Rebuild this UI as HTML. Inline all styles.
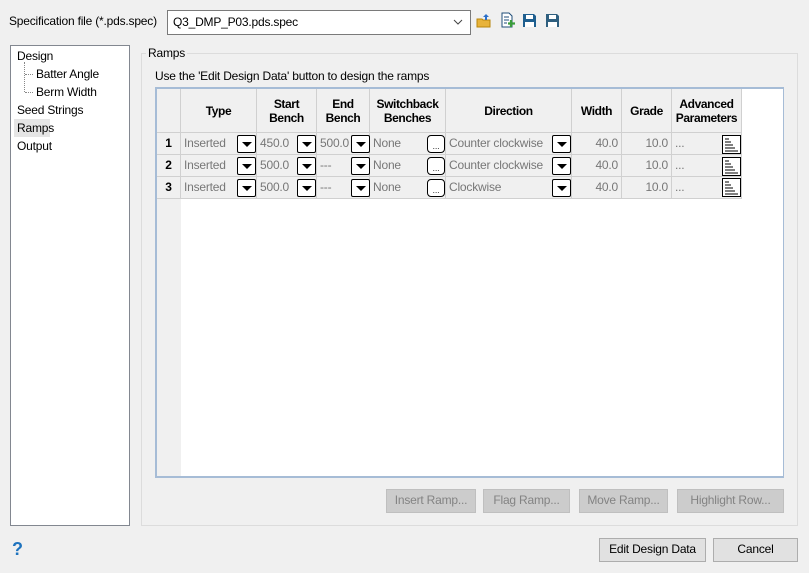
<!DOCTYPE html>
<html><head><style>
*{box-sizing:border-box;margin:0;padding:0}
body{width:809px;height:573px;background:#f0f0f0;font-family:"Liberation Sans",sans-serif;font-size:12px;letter-spacing:-0.2px;color:#000;position:relative;overflow:hidden}
.a{position:absolute;white-space:nowrap}
.btn{position:absolute;border:1px solid #adadad;background:#e1e1e1;text-align:center;line-height:21px}
.dis{background:#cccccc;border-color:#bfbfbf;color:#838383}
.hd{position:absolute;top:89px;height:44px;border-right:1px solid #d0d0d0;border-bottom:1px solid #d0d0d0;background:#f0f0f0;font-weight:bold;display:flex;align-items:center;justify-content:center;text-align:center;line-height:14px;letter-spacing:-0.4px}
.c{position:absolute;height:22px;border-right:1px solid #d0d0d0;border-bottom:1px solid #d0d0d0;background:#f0f0f0;color:#777;line-height:21px;padding-left:3px;overflow:hidden;white-space:nowrap}
.dd{position:absolute;width:19px;height:18px;border:1px solid #000;border-radius:2px;background:#fff}
.dd:after{content:"";position:absolute;left:4px;top:6px;border-left:5px solid transparent;border-right:5px solid transparent;border-top:5px solid #000}
.el{position:absolute;width:18px;height:18px;border:1px solid #000;border-radius:4px;background:#fff;font-size:9px;text-align:center;line-height:20px;color:#333}
.rn{position:absolute;left:157px;width:24px;height:22px;border-right:1px solid #d0d0d0;border-bottom:1px solid #d0d0d0;background:#f0f0f0;font-weight:bold;text-align:center;line-height:21px}
</style></head><body>
<div class="a" style="left:9px;top:14px">Specification file (*.pds.spec)</div>
<div class="a" style="left:167px;top:10px;width:304px;height:25px;background:#fff;border:1px solid #7a7a7a;padding:4px 0 0 5px">Q3_DMP_P03.pds.spec</div>
<svg class="a" style="left:453px;top:18px" width="10" height="8"><path d="M1 2l4 4 4-4" stroke="#444" fill="none"/></svg>
<svg class="a" style="left:476px;top:13px" width="16" height="16"><path d="M1 6h5l1 1h7v7H1z" fill="#e8b33a" stroke="#b8860b"/><path d="M10 1l3 3h-2v3h-2V4H7z" fill="#2a6fc9"/></svg>
<svg class="a" style="left:500px;top:12px" width="16" height="17"><path d="M2 1h7l3 3v11H2z" fill="#fff" stroke="#1f4e79"/><path d="M4 5h5M4 8h5M4 11h3" stroke="#1f4e79"/><path d="M11 8v7M8 11.5h7" stroke="#3a9c3a" stroke-width="2.2"/></svg>
<svg class="a" style="left:522px;top:13px" width="15" height="15"><path d="M1 1h11l2 2v11H1z" fill="#1f5f8f"/><rect x="4" y="2" width="7" height="4" fill="#fff"/><rect x="3" y="9" width="9" height="5" fill="#fff"/></svg>
<svg class="a" style="left:545px;top:13px" width="15" height="15"><path d="M1 1h11l2 2v11H1z" fill="#2f5f7f"/><rect x="4" y="2" width="7" height="4" fill="#fff"/><rect x="3" y="9" width="9" height="5" fill="#fff"/></svg>

<div class="a" style="left:10px;top:45px;width:120px;height:481px;background:#fff;border:1px solid #828790"></div>
<div class="a" style="left:17px;top:49px">Design</div>
<div class="a" style="left:24px;top:62px;width:1px;height:30px;border-left:1px dotted #888"></div>
<div class="a" style="left:25px;top:74px;width:8px;border-top:1px dotted #888"></div>
<div class="a" style="left:25px;top:92px;width:8px;border-top:1px dotted #888"></div>
<div class="a" style="left:36px;top:67px">Batter Angle</div>
<div class="a" style="left:36px;top:85px">Berm Width</div>
<div class="a" style="left:17px;top:103px">Seed Strings</div>
<div class="a" style="left:14px;top:119px;width:36px;height:18px;background:#e5e5e5"></div>
<div class="a" style="left:17px;top:121px">Ramps</div>
<div class="a" style="left:17px;top:139px">Output</div>

<div class="a" style="left:141px;top:53px;width:657px;height:473px;border:1px solid #dcdcdc"></div>
<div class="a" style="left:146px;top:46px;background:#f0f0f0;padding:0 2px">Ramps</div>
<div class="a" style="left:155px;top:69px">Use the 'Edit Design Data' button to design the ramps</div>

<div class="a" style="left:155px;top:87px;width:629px;height:391px;border:1px solid #a6bcd6;border-width:2px 1px 2px 2px;background:#fff"></div>
<div class="a" style="left:157px;top:89px;width:24px;height:387px;background:#f0f0f0"></div>
<div class="hd" style="left:157px;width:24px"></div>
<div class="hd" style="left:181px;width:76px">Type</div>
<div class="hd" style="left:257px;width:60px">Start<br>Bench</div>
<div class="hd" style="left:317px;width:53px">End<br>Bench</div>
<div class="hd" style="left:370px;width:76px">Switchback<br>Benches</div>
<div class="hd" style="left:446px;width:126px">Direction</div>
<div class="hd" style="left:572px;width:50px">Width</div>
<div class="hd" style="left:622px;width:50px">Grade</div>
<div class="hd" style="left:672px;width:70px">Advanced<br>Parameters</div>

<div class="rn" style="top:133px">1</div><div class="rn" style="top:155px">2</div><div class="rn" style="top:177px">3</div>

<div class="c" style="left:181px;top:133px;width:76px">Inserted</div><div class="dd" style="left:237px;top:135px"></div>
<div class="c" style="left:257px;top:133px;width:60px">450.0</div><div class="dd" style="left:297px;top:135px"></div>
<div class="c" style="left:317px;top:133px;width:53px">500.0</div><div class="dd" style="left:351px;top:135px"></div>
<div class="c" style="left:370px;top:133px;width:76px">None</div><div class="el" style="left:427px;top:135px">...</div>
<div class="c" style="left:446px;top:133px;width:126px">Counter clockwise</div><div class="dd" style="left:552px;top:135px"></div>
<div class="c" style="left:572px;top:133px;width:50px;text-align:right;padding-right:3px">40.0</div>
<div class="c" style="left:622px;top:133px;width:50px;text-align:right;padding-right:3px">10.0</div>
<div class="c" style="left:672px;top:133px;width:70px">...</div>

<div class="c" style="left:181px;top:155px;width:76px">Inserted</div><div class="dd" style="left:237px;top:157px"></div>
<div class="c" style="left:257px;top:155px;width:60px">500.0</div><div class="dd" style="left:297px;top:157px"></div>
<div class="c" style="left:317px;top:155px;width:53px">---</div><div class="dd" style="left:351px;top:157px"></div>
<div class="c" style="left:370px;top:155px;width:76px">None</div><div class="el" style="left:427px;top:157px">...</div>
<div class="c" style="left:446px;top:155px;width:126px">Counter clockwise</div><div class="dd" style="left:552px;top:157px"></div>
<div class="c" style="left:572px;top:155px;width:50px;text-align:right;padding-right:3px">40.0</div>
<div class="c" style="left:622px;top:155px;width:50px;text-align:right;padding-right:3px">10.0</div>
<div class="c" style="left:672px;top:155px;width:70px">...</div>

<div class="c" style="left:181px;top:177px;width:76px">Inserted</div><div class="dd" style="left:237px;top:179px"></div>
<div class="c" style="left:257px;top:177px;width:60px">500.0</div><div class="dd" style="left:297px;top:179px"></div>
<div class="c" style="left:317px;top:177px;width:53px">---</div><div class="dd" style="left:351px;top:179px"></div>
<div class="c" style="left:370px;top:177px;width:76px">None</div><div class="el" style="left:427px;top:179px">...</div>
<div class="c" style="left:446px;top:177px;width:126px">Clockwise</div><div class="dd" style="left:552px;top:179px"></div>
<div class="c" style="left:572px;top:177px;width:50px;text-align:right;padding-right:3px">40.0</div>
<div class="c" style="left:622px;top:177px;width:50px;text-align:right;padding-right:3px">10.0</div>
<div class="c" style="left:672px;top:177px;width:70px">...</div>

<svg class="a" style="left:722px;top:135px" width="19" height="62"><g fill="#fff" stroke="#000"><rect x=".5" y=".5" width="18" height="18"/><rect x=".5" y="22.5" width="18" height="18"/><rect x=".5" y="43.5" width="18" height="18"/></g><g stroke="#000"><path d="M3 4h4M3 7h6M3 10h8M3 13h10M3 16h13"/><path d="M3 26h4M3 29h6M3 32h8M3 35h10M3 38h13"/><path d="M3 47h4M3 50h6M3 53h8M3 56h10M3 59h13"/></g></svg>

<div class="btn dis" style="left:386px;top:489px;width:90px;height:24px">Insert Ramp...</div>
<div class="btn dis" style="left:483px;top:489px;width:87px;height:24px">Flag Ramp...</div>
<div class="btn dis" style="left:579px;top:489px;width:89px;height:24px">Move Ramp...</div>
<div class="btn dis" style="left:677px;top:489px;width:107px;height:24px">Highlight Row...</div>

<div class="a" style="left:12px;top:539px;font-size:18px;font-weight:bold;color:#1e73be">?</div>
<div class="btn" style="left:599px;top:538px;width:107px;height:24px">Edit Design Data</div>
<div class="btn" style="left:713px;top:538px;width:85px;height:24px">Cancel</div>
</body></html>
